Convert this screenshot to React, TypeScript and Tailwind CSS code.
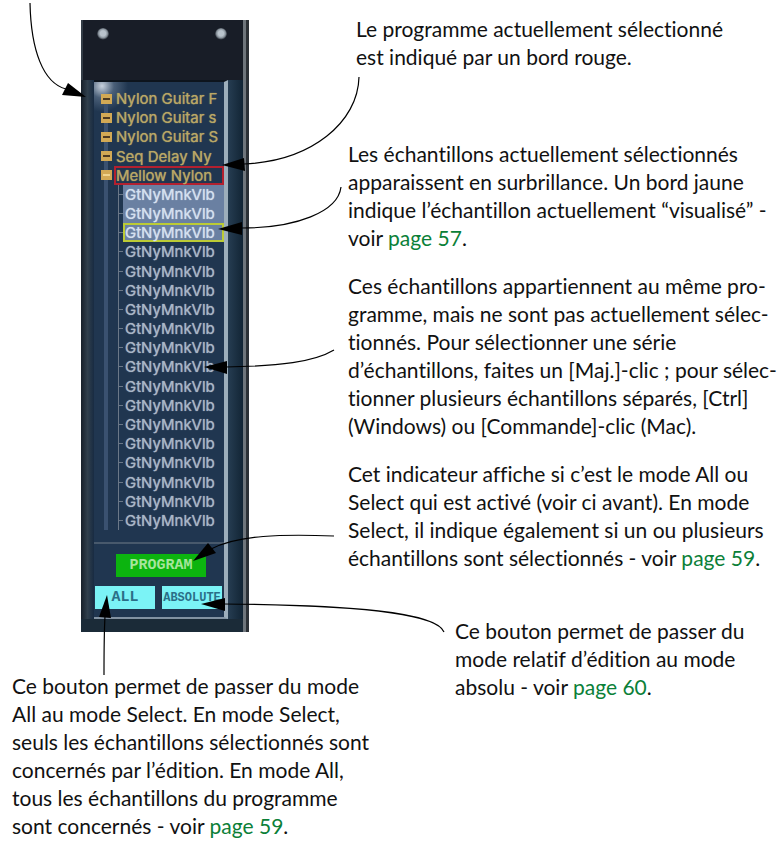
import type { ReactNode } from 'react';
import clsx from 'clsx';

const programs = ['Nylon Guitar F', 'Nylon Guitar s', 'Nylon Guitar S', 'Seq Delay Ny', 'Mellow Nylon'];
const samples = Array.from({ length: 18 }, () => 'GtNyMnkVlb');

const SELECTED_PROGRAM = 4;
const VIEWED_SAMPLE = 2;

// curved leader lines and their arrow heads
const arrows = [
  { line: 'M30 3 C31 50 43 83 66 89', head: '86,97 62,95 68,83' },
  { line: 'M359 77 C358 122 312 161 244 164', head: '222,165 244,158 245,171' },
  { line: 'M341 187 C338 212 296 228 242 228', head: '218,229 242,222 242,235' },
  { line: 'M334 350 C314 362 280 366 226 367', head: '204,367 227,361 227,374' },
  { line: 'M334 536 C282 534 238 535 211 549', head: '193,561 208,543 216,553' },
  { line: 'M444 632 C436 612 350 605 224 604', head: '201,604 225,598 225,611' },
  { line: 'M104 675 C104 650 104 635 105 616', head: '107,595 99,617 111,618' },
];

function Screw() {
  return (
    <span className="size-3 rounded-full bg-[radial-gradient(circle_at_50%_45%,_#b9c3cc_30%,_#8a949d_50%,_#181d27_72%)]" />
  );
}

function ProgramRow({ name, selected }: { name: string; selected: boolean }) {
  return (
    <li className="flex min-h-0 flex-1 items-center gap-[2px] pl-[7px]">
      <span className="flex h-[10px] w-[11px] shrink-0 items-center justify-center bg-[#d2a955]">
        <span className={clsx('h-[2px] w-[7px]', selected ? 'bg-[#f0d48e]' : 'bg-[#4d3a22]')} />
      </span>
      <span
        className={clsx(
          'flex h-full min-w-0 flex-1 items-center overflow-x-clip border-2 text-[15px] leading-none whitespace-nowrap text-[#b9a765] [text-shadow:0_0_1px_currentColor]',
          selected ? 'border-[#b3202f]' : 'border-transparent'
        )}
      >
        {name}
      </span>
    </li>
  );
}

function SampleRow({ name, selected, viewed }: { name: string; selected: boolean; viewed: boolean }) {
  return (
    <li className="flex min-h-0 flex-1 items-center pl-6">
      <span className="flex h-full w-[5px] shrink-0 items-center border-l border-[#6b7888]">
        <span className="h-px w-1 bg-[#6b7888]" />
      </span>
      <span
        className={clsx(
          'flex h-full min-w-0 flex-1 items-center overflow-x-clip border-2 text-[15px] leading-none whitespace-nowrap [text-shadow:0_0_1px_currentColor]',
          selected ? 'bg-[#6a80a2] text-[#d5e0ef]' : 'text-[#a9b6c6]',
          viewed ? 'border-[#bccb35]' : 'border-transparent'
        )}
      >
        {name}
      </span>
    </li>
  );
}

function Panel() {
  return (
    <section className="flex w-[168px] bg-[#14202c] font-['Inter',sans-serif]" aria-label="Programmes">
      <div className="min-w-0 flex-1">
        <div className="flex h-[60px] justify-between border-l-2 border-[#333c46] bg-[#181d27] pt-2 pr-4 pl-[14px]">
          <Screw />
          <Screw />
        </div>
        <div className="flex">
          <div className="w-[13px] bg-linear-to-r from-[#17202a] via-[#303f4c] to-[#182b42]" />
          <div className="min-w-0 flex-1 border-t-2 border-r-4 border-b-2 border-t-[#0d141d] border-r-[#9daebb] border-b-[#8292a2] bg-[#203650] bg-[radial-gradient(circle_at_8px_4px,_#c8d2de_0px,_#4a5f78_12px,_transparent_26px)]">
            <div className="relative pt-[7px]">
              <span className="absolute top-3 bottom-0 left-[10px] w-1 bg-[#3a5170]" />
              <ul className="relative flex h-[441px] flex-col">
                {programs.map((name, i) => (
                  <ProgramRow key={name} name={name} selected={i === SELECTED_PROGRAM} />
                ))}
                {samples.map((name, i) => (
                  <SampleRow key={i} name={name} selected={i <= VIEWED_SAMPLE} viewed={i === VIEWED_SAMPLE} />
                ))}
              </ul>
            </div>
            <div className="mt-3 h-[2px] bg-[#48596c]" />
            <div className="flex justify-center pt-[10px] pl-1">
              <output className="flex h-[23px] w-[90px] items-center justify-center bg-[#0cb40f] font-['Liberation_Mono',monospace] text-[15px] leading-none font-bold text-[#a5e59c]">
                PROGRAM
              </output>
            </div>
            <div className="flex gap-[7px] pt-[9px] pr-[2px] pb-2 pl-px font-['Liberation_Mono',monospace] font-bold text-[#2b6f88]">
              <button type="button" className="h-[23px] flex-1 bg-[#7bf3f6] text-[15px] leading-none">
                ALL
              </button>
              <button type="button" className="h-[23px] flex-1 bg-[#7bf3f6] text-xs leading-none">
                ABSOLUTE
              </button>
            </div>
          </div>
          <div className="w-[15px] bg-linear-to-r from-[#263d52] to-[#122535]" />
        </div>
        <div className="h-[13px] bg-[#1b2b38]" />
      </div>
      <div className="w-[6px] border-l-3 border-[#6f767c] bg-[#2c3136]" />
    </section>
  );
}

function Note({ className, children }: { className?: string; children: ReactNode }) {
  return <p className={clsx('whitespace-nowrap', className)}>{children}</p>;
}

function PageLink({ page }: { page: number }) {
  return (
    <a href={`#page-${page}`} className="text-[#0b8038]">
      page {page}
    </a>
  );
}

export default function App() {
  return (
    <main className="relative flex min-h-screen overflow-hidden bg-white font-['Lato',sans-serif] text-[21px] leading-7 text-[#111] [font-variant-ligatures:none]">
      <div className="w-[348px] shrink-0 pt-5">
        <div className="pl-[81px]">
          <Panel />
        </div>
        <Note className="pt-10 pl-3">
          Ce bouton permet de passer du mode
          <br />
          All au mode Select. En mode Select,
          <br />
          seuls les échantillons sélectionnés sont
          <br />
          concernés par l’édition. En mode All,
          <br />
          tous les échantillons du programme
          <br />
          sont concernés - voir <PageLink page={59} />.
        </Note>
      </div>

      <div className="min-w-0 flex-1 pt-[15px]">
        <Note className="pl-2">
          Le programme actuellement sélectionné
          <br />
          est indiqué par un bord rouge.
        </Note>
        <Note className="pt-[69px]">
          Les échantillons actuellement sélectionnés
          <br />
          apparaissent en surbrillance. Un bord jaune
          <br />
          indique l’échantillon actuellement “visualisé” -
          <br />
          voir <PageLink page={57} />.
        </Note>
        <Note className="pt-5">
          Ces échantillons appartiennent au même pro-
          <br />
          gramme, mais ne sont pas actuellement sélec-
          <br />
          tionnés. Pour sélectionner une série
          <br />
          d’échantillons, faites un [Maj.]-clic ; pour sélec-
          <br />
          tionner plusieurs échantillons séparés, [Ctrl]
          <br />
          (Windows) ou [Commande]-clic (Mac).
        </Note>
        <Note className="pt-5">
          Cet indicateur affiche si c’est le mode All ou
          <br />
          Select qui est activé (voir ci avant). En mode
          <br />
          Select, il indique également si un ou plusieurs
          <br />
          échantillons sont sélectionnés - voir <PageLink page={59} />.
        </Note>
        <Note className="pt-[45px] pl-[107px]">
          Ce bouton permet de passer du
          <br />
          mode relatif d’édition au mode
          <br />
          absolu - voir <PageLink page={60} />.
        </Note>
      </div>

      <svg
        className="pointer-events-none absolute top-0 left-0"
        width="781"
        height="846"
        viewBox="0 0 781 846"
        fill="none"
        aria-hidden="true"
      >
        {arrows.map(({ line, head }) => (
          <g key={head}>
            <path d={line} stroke="#000" strokeWidth="1.2" />
            <polygon points={head} fill="#000" />
          </g>
        ))}
      </svg>
    </main>
  );
}
